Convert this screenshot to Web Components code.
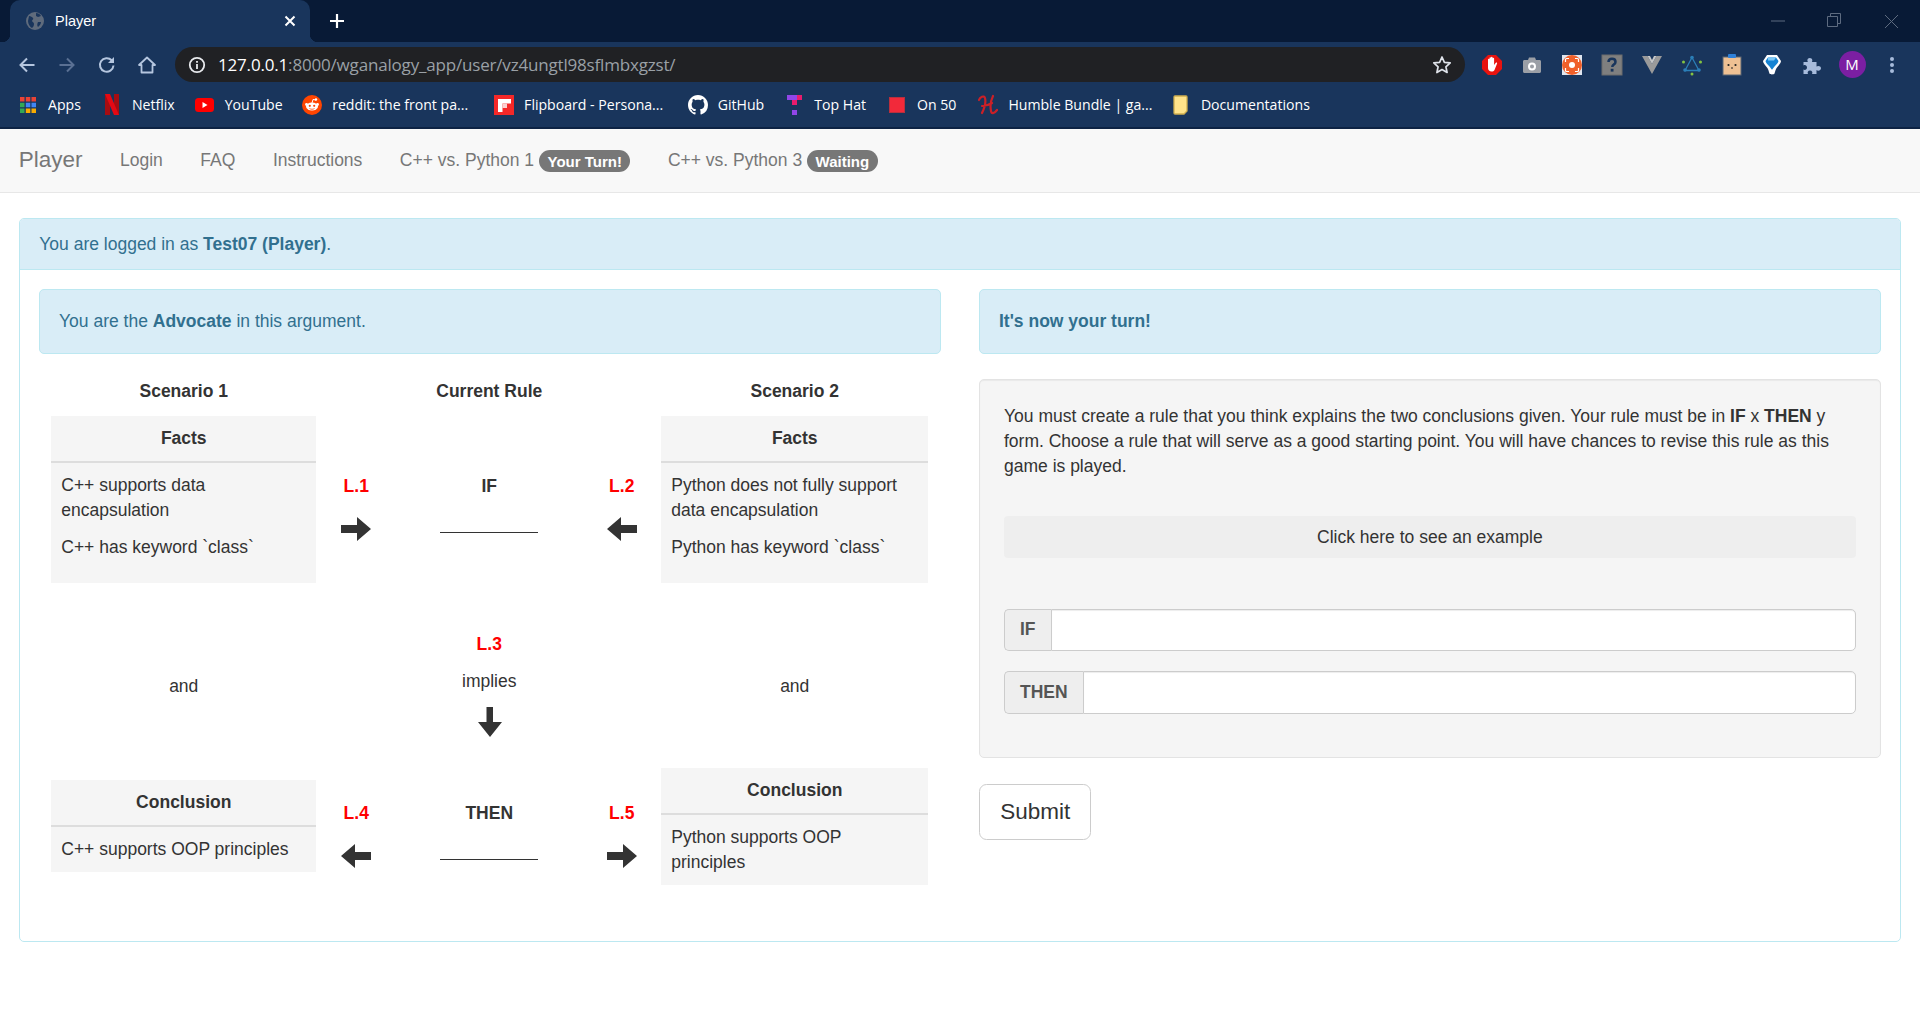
<!DOCTYPE html>
<html>
<head>
<meta charset="utf-8">
<title>Player</title>
<style>
  html, body { margin: 0; padding: 0; background: #fff; }
  body { font: 17.5px/25px "Liberation Sans", Arial, sans-serif; color: #333; }
  fact-box p { margin: 0 0 12.5px; }
  fact-box p:last-child { margin-bottom: 0; }
</style>
</head>
<body>
<browser-chrome></browser-chrome>
<player-nav>
  <nav-link>Login</nav-link>
  <nav-link>FAQ</nav-link>
  <nav-link>Instructions</nav-link>
  <nav-link badge="Your Turn!">C++ vs. Python 1</nav-link>
  <nav-link badge="Waiting">C++ vs. Python 3</nav-link>
</player-nav>
<info-panel>
  <span slot="heading">You are logged in as <b>Test07 (Player)</b>.</span>
  <div slot="left">
    <info-alert>You are the <b>Advocate</b> in this argument.</info-alert>
    <scenario-board>
      <board-title style="grid-column:1">Scenario 1</board-title>
      <board-title style="grid-column:3">Current Rule</board-title>
      <board-title style="grid-column:5">Scenario 2</board-title>

      <fact-box heading="Facts" style="grid-column:1;align-self:stretch">
        <p>C++ supports data encapsulation</p>
        <p>C++ has keyword `class`</p>
      </fact-box>
      <link-label dir="right" style="grid-column:2">L.1</link-label>
      <rule-blank style="grid-column:3">IF</rule-blank>
      <link-label dir="left" style="grid-column:4">L.2</link-label>
      <fact-box heading="Facts" style="grid-column:5;align-self:stretch">
        <p>Python does not fully support data encapsulation</p>
        <p>Python has keyword `class`</p>
      </fact-box>

      <board-and style="grid-column:1">and</board-and>
      <board-implies style="grid-column:3"></board-implies>
      <board-and style="grid-column:5">and</board-and>

      <fact-box heading="Conclusion" style="grid-column:1">
        <p>C++ supports OOP principles</p>
      </fact-box>
      <link-label dir="left" style="grid-column:2">L.4</link-label>
      <rule-blank style="grid-column:3">THEN</rule-blank>
      <link-label dir="right" style="grid-column:4">L.5</link-label>
      <fact-box heading="Conclusion" style="grid-column:5">
        <p>Python supports OOP principles</p>
      </fact-box>
    </scenario-board>
  </div>
  <div slot="right">
    <info-alert><b>It's now your turn!</b></info-alert>
    <rule-form>
      You must create a rule that you think explains the two conclusions given. Your rule must be in <b>IF</b> x <b>THEN</b> <span>y</span> <span>form. Choose a rule that will serve as a good starting point. You will have chances to revise this rule as this game is played.</span>
    </rule-form>
    <submit-button>Submit</submit-button>
  </div>
</info-panel>

<script>
function define(name, html) {
  customElements.define(name, class extends HTMLElement {
    constructor() {
      super();
      this.attachShadow({ mode: 'open' });
      this.shadowRoot.innerHTML = html;
    }
  });
}

const ARROWS = {
  right: '<svg width="30" height="24" viewBox="0 0 30 24"><path d="M0 8H16V0L30 12 16 24V16H0z" fill="#333"/></svg>',
  left: '<svg width="30" height="24" viewBox="0 0 30 24"><path d="M30 8H14V0L0 12 14 24V16H30z" fill="#333"/></svg>',
  down: '<svg width="24" height="30" viewBox="0 0 24 30"><path d="M8.5 0H15V15H24L12 30 0 15H8.5z" fill="#333"/></svg>'
};

define('tab-strip', `
  <style>
    :host { display: flex; align-items: flex-end; height: 42px; background: #081a36; padding-left: 10px; color: #fff; }
    .tab { position: relative; width: 300px; height: 42px; box-sizing: border-box; background: #19355c; border-radius: 10px 10px 0 0; display: flex; align-items: center; padding: 0 13px 0 15px; gap: 10px; font-size: 14.5px; }
    .tab::after { content: ''; position: absolute; right: -8px; bottom: 0; width: 8px; height: 8px; background: radial-gradient(circle at 100% 0, transparent 8px, #19355c 8.5px); }
    .tab::before { content: ''; position: absolute; left: -8px; bottom: 0; width: 8px; height: 8px; background: radial-gradient(circle at 0 0, transparent 8px, #19355c 8.5px); }
    .title { flex: 1; }
    .plus { margin-left: 18px; align-self: center; display: flex; }
    .win { margin-left: auto; display: flex; align-self: center; }
    .win svg { width: 56px; height: 22px; }
  </style>
  <div class="tab">
    <svg width="20" height="20" viewBox="0 0 20 20"><circle cx="10" cy="10" r="9" fill="#5f6b7c"/><path d="M4 5c2 0 3 1 4 2s-1 2-1 3 2 1 2 3-1 3-2 4c-2-1-4-4-4-7zM11 2c2 0 4 1 5 3l-3 1-2-1zM13 11l3 0c0 2-1 3-3 5-1-1-1-3 0-5z" fill="#19355c"/></svg>
    <span class="title">Player</span>
    <svg width="14" height="14" viewBox="0 0 14 14"><path d="M2.5 2.5l9 9m0-9l-9 9" stroke="#fff" stroke-width="2"/></svg>
  </div>
  <span class="plus"><svg width="18" height="18" viewBox="0 0 18 18"><path d="M9 2v14M2 9h14" stroke="#fff" stroke-width="2.2"/></svg></span>
  <span class="win">
    <svg viewBox="0 0 56 22"><path d="M19 11h14" stroke="#5d6b80" stroke-width="1"/></svg>
    <svg viewBox="0 0 56 22"><path d="M19.500 6.500h10v10h-10zM22.500 6.500v-3h10v10h-3" fill="none" stroke="#5d6b80"/></svg>
    <svg viewBox="0 0 56 22"><path d="M21 5l13 13M34 5L21 18" fill="none" stroke="#5d6b80"/></svg>
  </span>
`);

define('browser-toolbar', `
  <style>
    :host { display: flex; height: 45px; background: #19355c; align-items: flex-start; padding: 5px 8px 0 7px; box-sizing: border-box; }
    .btn { width: 40px; height: 35px; display: flex; align-items: center; justify-content: center; flex: none; }
    .nav { display: flex; margin-right: 8px; }
    .bar { flex: none; width: 1290px; height: 35px; border-radius: 18px; background: #202124; display: flex; align-items: center; padding: 0 13px 0 13px; box-sizing: border-box; color: #9aa0a6; font: 17px "Open Sans", sans-serif; letter-spacing: -.18px; }
    .bar b { color: #fff; font-weight: 400; }
    .url { flex: 1; margin-left: 12px; white-space: nowrap; }
    .ext { display: flex; margin-left: 7px; }
  </style>
  <div class="nav">
    <span class="btn"><svg width="20" height="20" viewBox="0 0 20 20"><path d="M17.500 10H4M10 3.500L3.500 10l6.500 6.500" fill="none" stroke="#b5c6df" stroke-width="2"/></svg></span>
    <span class="btn"><svg width="20" height="20" viewBox="0 0 20 20"><path d="M2.500 10H16M10 3.500l6.500 6.500L10 16.500" fill="none" stroke="#5a7093" stroke-width="2"/></svg></span>
    <span class="btn"><svg width="20" height="20" viewBox="0 0 20 20"><path d="M16.500 10.500a6.800 6.800 0 1 1-1.800-5.200" fill="none" stroke="#b5c6df" stroke-width="2"/><path d="M17 2v6h-6z" fill="#b5c6df"/></svg></span>
    <span class="btn"><svg width="20" height="20" viewBox="0 0 20 20"><path d="M10 2.500L2 10h2.500v7.500h11V10H18zM5 9" fill="none" stroke="#b5c6df" stroke-width="1.800" stroke-linejoin="round"/></svg></span>
  </div>
  <div class="bar">
    <svg width="18" height="18" viewBox="0 0 18 18"><circle cx="9" cy="9" r="7.200" fill="none" stroke="#e8eaed" stroke-width="1.800"/><path d="M9 5v1.800M9 8v5" stroke="#e8eaed" stroke-width="1.800"/></svg>
    <span class="url"><b>127.0.0.1</b>:8000/wganalogy_app/user/vz4ungtl98sflmbxgzst/</span>
    <svg width="20" height="20" viewBox="0 0 20 20"><path d="M10 2l2.400 5.300 5.800.6-4.300 3.900 1.200 5.700L10 14.600l-5.100 2.900 1.200-5.700L1.800 7.900l5.800-.6z" fill="none" stroke="#dfe3ea" stroke-width="1.700" stroke-linejoin="round"/></svg>
  </div>
  <div class="ext">
    <span class="btn"><svg width="22" height="22" viewBox="0 0 22 22"><path d="M7 1h8l6 6v8l-6 6H7l-6-6V7z" fill="#e8130f"/><path d="M7 9.500V5.500c0-1 1.500-1 1.500 0V9V4c0-1 1.500-1 1.500 0v5V3.500c0-1 1.600-1 1.600 0V9V4.500c0-1 1.500-1 1.500 0V11l1.500-2c1-1 2 0 1.300 1L13.500 16c-.7 1-1.500 1.500-3 1.500-2 0-3.500-1.500-3.500-3.500z" fill="#fff"/></svg></span>
    <span class="btn"><svg width="22" height="22" viewBox="0 0 22 22"><path d="M2 7.500c0-1 .7-1.500 1.500-1.500H7l1-2.500h6L15 6h3.500c.8 0 1.500.5 1.500 1.500v10c0 .8-.7 1.500-1.500 1.500h-15C2.700 19 2 18.300 2 17.500z" fill="#9b9fa6"/><circle cx="11" cy="12.500" r="3" fill="none" stroke="#fff" stroke-width="2"/></svg></span>
    <span class="btn"><svg width="22" height="22" viewBox="0 0 22 22"><rect x="1" y="1" width="20" height="20" fill="#dfe5ee"/><circle cx="11" cy="11" r="10" fill="#f0602a"/><circle cx="11" cy="11" r="3" fill="#fff"/><path d="M4.500 8V5.500a1 1 0 0 1 1-1H8M14 4.500h2.500a1 1 0 0 1 1 1V8M17.500 14v2.500a1 1 0 0 1-1 1H14M8 17.500H5.500a1 1 0 0 1-1-1V14" fill="none" stroke="#fff" stroke-width="1.200"/></svg></span>
    <span class="btn"><svg width="22" height="22" viewBox="0 0 22 22"><rect x="1" y="1" width="20" height="20" fill="#7f7f7f" stroke="#6d6d6d"/><path d="M7.500 8c0-2 1.500-3.300 3.500-3.300s3.500 1.300 3.500 3.200c0 2.600-3.200 2.700-3.200 5" fill="none" stroke="#19355c" stroke-width="2.500"/><rect x="9.700" y="14.800" width="2.800" height="2.800" fill="#19355c"/></svg></span>
    <span class="btn"><svg width="22" height="20" viewBox="0 0 22 20"><path d="M1 1h5.500L11 9l4.500-8H21L11 19z" fill="#9a9a9a"/><path d="M6.500 1H9l2 4 2-4h2.500L11 9z" fill="#c7c7c7"/></svg></span>
    <span class="btn"><svg width="22" height="22" viewBox="0 0 22 22"><path d="M11 3.500L4 16.500h14z" fill="none" stroke="#2b7fb8" stroke-width="1.300"/><circle cx="11" cy="3.500" r="1.800" fill="#2b7fb8"/><circle cx="4" cy="16" r="1.800" fill="#2b7fb8"/><circle cx="18" cy="16" r="1.800" fill="#2b7fb8"/><circle cx="2.500" cy="8" r="1.500" fill="#84c341"/><circle cx="19.500" cy="8" r="1.500" fill="#84c341"/><circle cx="11" cy="20" r="1.500" fill="#84c341"/></svg></span>
    <span class="btn"><svg width="22" height="24" viewBox="0 0 22 24"><rect x="2" y="4" width="18" height="18" fill="#eec093" stroke="#5b6674"/><rect x="7" y="1" width="8" height="4" rx="1" fill="#2f80d8"/><circle cx="7.500" cy="12" r="1.100" fill="#222"/><circle cx="14.500" cy="12" r="1.100" fill="#222"/><path d="M10 15h2" stroke="#222" stroke-width="1.200"/></svg></span>
    <span class="btn"><svg width="20" height="24" viewBox="0 0 20 24"><path d="M5 2h10l4 6c0 2-2 4-4 6.500-1.300 1.600-1.800 4-2.500 6-.5 1.200-4.500 1.200-5 0-.7-2-1.200-4.400-2.500-6C3 12 1 10 1 8z" fill="#fff"/><path d="M6 4.500h8l2.500 3.500c-.5 2-2 3.500-4 5.500-1.200 1.200-1.500 2.300-2.500 3.300-1-1-1.300-2.100-2.500-3.300-2-2-3.500-3.500-4-5.500z" fill="#1583d3"/><path d="M6 4.500h8l-2 3H6z" fill="#7cc8f5"/></svg></span>
    <span class="btn"><svg width="22" height="22" viewBox="0 0 22 22"><path d="M2.500 8H7c-1-1-1-4 1.800-4S11.800 7 10.800 8h4.700v4.500c1-1 4.500-1 4.500 1.800s-3.500 2.800-4.500 1.800V20H11c1-1.500 0-3.500-2-3.500S6 18.500 7 20H2.500v-4.500c1.500 1 3.500 0 3.500-2S4 10.500 2.500 11.500z" fill="#a7bbdb"/></svg></span>
    <span class="btn"><span style="width:27px;height:27px;border-radius:50%;background:#7b1fa2;color:#fff;font:15px/27px 'Open Sans',sans-serif;text-align:center">M</span></span>
    <span class="btn"><svg width="6" height="20" viewBox="0 0 6 20"><circle cx="3" cy="4" r="2" fill="#a7bbdb"/><circle cx="3" cy="10" r="2" fill="#a7bbdb"/><circle cx="3" cy="16" r="2" fill="#a7bbdb"/></svg></span>
  </div>
`);

define('bookmark-item', `
  <style>
    :host { display: flex; align-items: center; gap: 10px; white-space: nowrap; }
    .icon { width: 20px; height: 22px; display: flex; align-items: center; justify-content: center; }
  </style>
  <span class="icon"><slot name="icon"></slot></span><slot></slot>
`);

define('bookmark-bar', `
  <style>
    :host { display: flex; height: 42px; box-sizing: border-box; background: #19355c; border-bottom: 2px solid #0d2344; align-items: center; padding: 0 0 5px 18px; gap: 21px; color: #fff; font: 14.1px "Open Sans", sans-serif; }
  </style>
  <bookmark-item><svg slot="icon" width="18" height="18" viewBox="0 0 18 18"><path d="M1 1h4.500v4.500H1zM6.800 1h4.500v4.500H6.800zM12.500 1H17v4.500h-4.500z" fill="#ea4335"/><path d="M1 6.800h4.500v4.500H1zM1 12.500h4.500V17H1z" fill="#34a853"/><path d="M6.800 6.800h4.500v4.500H6.800zM12.500 6.800H17v4.500h-4.500z" fill="#4285f4"/><path d="M6.800 12.500h4.500V17H6.800zM12.500 12.500H17V17h-4.500z" fill="#f9ab00"/></svg>Apps</bookmark-item>
  <bookmark-item><svg slot="icon" width="14" height="21" viewBox="0 0 14 21"><path d="M0 0h5v21l-5 .5zM9 0h5v21l-5-.5z" fill="#a60d12"/><path d="M0 0h5l9 21H9z" fill="#e50914"/></svg>Netflix</bookmark-item>
  <bookmark-item style="margin-left:-1px"><svg slot="icon" width="19" height="14" viewBox="0 0 19 14"><rect width="19" height="14" rx="3.500" fill="#f00"/><path d="M7.500 4l5 3-5 3z" fill="#fff"/></svg>YouTube</bookmark-item>
  <bookmark-item style="margin-left:-1.500px"><svg slot="icon" width="20" height="20" viewBox="0 0 20 20"><circle cx="10" cy="10" r="10" fill="#ff4500"/><ellipse cx="10" cy="11.500" rx="6" ry="4" fill="#fff"/><circle cx="4.500" cy="9.500" r="1.400" fill="#fff"/><circle cx="15.500" cy="9.500" r="1.400" fill="#fff"/><circle cx="14" cy="4.500" r="1.200" fill="#fff"/><path d="M10 8l1-3.500 3 .5" fill="none" stroke="#fff"/><circle cx="7.800" cy="10.800" r="1.100" fill="#ff4500"/><circle cx="12.200" cy="10.800" r="1.100" fill="#ff4500"/><path d="M7.500 13.500c1.500 1 3.500 1 5 0" fill="none" stroke="#ff4500" stroke-width=".8"/></svg>reddit: the front pa...</bookmark-item>
  <bookmark-item style="margin-left:5px"><svg slot="icon" width="20" height="20" viewBox="0 0 20 20"><rect width="20" height="20" fill="#f52828"/><path d="M4 4h13v4.500H8.500V13H4z" fill="#fff"/><path d="M4 13h4.500v4H4z" fill="#fff"/><path d="M8.500 8.500h4.500V13H8.500z" fill="#fbd0d0"/></svg>Flipboard - Persona...</bookmark-item>
  <bookmark-item style="margin-left:3.500px"><svg slot="icon" width="20" height="20" viewBox="0 0 16 16"><path fill="#fff" d="M8 0C3.580 0 0 3.580 0 8c0 3.540 2.290 6.530 5.470 7.590.4.070.55-.17.55-.38 0-.19-.01-.82-.01-1.490-2.010.37-2.530-.49-2.690-.94-.09-.23-.48-.94-.82-1.130-.28-.15-.68-.52-.01-.53.63-.01 1.080.58 1.230.82.72 1.210 1.870.87 2.330.66.07-.52.28-.87.51-1.070-1.780-.2-3.640-.89-3.640-3.950 0-.87.31-1.590.82-2.150-.08-.2-.36-1.020.08-2.120 0 0 .67-.21 2.200.82.64-.18 1.320-.27 2-.27.68 0 1.360.09 2 .27 1.530-1.040 2.200-.82 2.200-.82.44 1.100.16 1.920.08 2.120.51.56.82 1.270.82 2.150 0 3.070-1.870 3.750-3.650 3.950.29.25.54.73.54 1.480 0 1.070-.01 1.930-.01 2.200 0 .21.15.46.55.38A8.013 8.013 0 0016 8c0-4.420-3.580-8-8-8z"/></svg>GitHub</bookmark-item>
  <bookmark-item style="margin-left:-1px"><svg slot="icon" width="15" height="20" viewBox="0 0 15 20"><rect width="10" height="5" fill="#9146e8"/><rect x="10" width="5" height="5" fill="#e81c6d"/><rect x="5" y="5" width="5" height="5" fill="#e81c6d"/><rect x="5" y="15" width="5" height="5" fill="#9146e8"/></svg>Top Hat</bookmark-item>
  <bookmark-item><svg slot="icon" width="16" height="16" viewBox="0 0 16 16"><rect x=".5" y=".5" width="15" height="15" fill="#f2293a" stroke="#b8303d"/></svg>On 50</bookmark-item>
  <bookmark-item style="margin-left:1px"><svg slot="icon" width="20" height="22" viewBox="0 0 20 22"><path d="M1 6c1-3 5-5 6-2 1 4-1 11-3 15M15 2c-2 4-3 10-2 15 .5 3 3 3 6-1M4 12c3 0 7-1 10-3" fill="none" stroke="#cb2027" stroke-width="2.200" stroke-linecap="round"/></svg>Humble Bundle | ga...</bookmark-item>
  <bookmark-item style="margin-left:-2.500px"><svg slot="icon" width="16" height="20" viewBox="0 0 16 20"><path d="M1 2a1 1 0 0 1 1-1h11a1 1 0 0 1 1 1v14l-3 3H2a1 1 0 0 1-1-1z" fill="#ffe38a" stroke="#cfae4f" stroke-width="1.300"/></svg>Documentations</bookmark-item>
`);

define('browser-chrome', `
  <style>:host { display: block; }</style>
  <tab-strip></tab-strip>
  <browser-toolbar></browser-toolbar>
  <bookmark-bar></bookmark-bar>
`);

define('nav-link', `
  <style>
    :host { display: block; padding: 19px 18.75px; color: #777; white-space: nowrap; }
    .badge { display: inline-block; padding: 3.75px 8.5px; background: #777; color: #fff; font-size: 15px; font-weight: 700; line-height: 15px; border-radius: 12.5px; vertical-align: -.5px; }
    .badge:empty { display: none; }
  </style>
  <slot></slot> <span class="badge"></span>
`);
customElements.whenDefined('nav-link').then(() => {
  document.querySelectorAll('nav-link').forEach(link => {
    link.shadowRoot.querySelector('.badge').textContent = link.getAttribute('badge') || '';
  });
});

define('player-nav', `
  <style>
    :host { display: flex; height: 64px; box-sizing: border-box; background: #f8f8f8; border-bottom: 1px solid #e7e7e7; margin-bottom: 25px; }
    .brand { padding: 18px 18.75px; color: #777; font-size: 22.5px; }
  </style>
  <div class="brand">Player</div><slot></slot>
`);

define('info-panel', `
  <style>
    :host { display: block; margin: 0 18.75px; border: 1px solid #bce8f1; border-radius: 5px; box-sizing: border-box; }
    .head { padding: 12.5px 15px 12.5px 19.5px; background: #d9edf7; color: #31708f; border-bottom: 1px solid #bce8f1; border-radius: 4px 4px 0 0; }
    .body { display: grid; grid-template-columns: 1fr 1fr; gap: 38px; padding: 18.75px 19px 18.75px 19.5px; }
  </style>
  <div class="head"><slot name="heading"></slot></div>
  <div class="body"><slot name="left"></slot><slot name="right"></slot></div>
`);

define('info-alert', `
  <style>
    :host { display: block; padding: 18.75px; min-height: 65px; box-sizing: border-box; background: #d9edf7; border: 1px solid #bce8f1; border-radius: 5px; color: #31708f; }
  </style>
  <slot></slot>
`);

define('scenario-board', `
  <style>
    :host { display: block; margin: 23.5px 12px 37px; }
    .grid { display: grid; grid-template-columns: 265px 80px 186px 79px 267px; grid-template-rows: 38.5px 167px 185px 117px; }
  </style>
  <div class="grid"><slot></slot></div>
`);

define('board-title', `
  <style>:host { display: block; padding-top: 2px; text-align: center; font-weight: 700; }</style>
  <slot></slot>
`);

define('board-and', `
  <style>:host { display: block; text-align: center; padding-top: 91.5px; }</style>
  <slot></slot>
`);

define('board-implies', `
  <style>
    :host { display: flex; flex-direction: column; align-items: center; padding-top: 49px; }
    b { color: #f00; margin-bottom: 12.5px; }
    svg { display: block; margin: 13px 0 0 2px; }
  </style>
  <b>L.3</b><span>implies</span>${ARROWS.down}
`);

define('fact-box', `
  <style>
    :host { display: block; align-self: center; background: #f5f5f5; }
    .head { padding: 10px; text-align: center; font-weight: 700; border-bottom: 2px solid #ddd; }
    .body { padding: 10px; }
  </style>
  <div class="head"></div>
  <div class="body"><slot></slot></div>
`);
customElements.whenDefined('fact-box').then(() => {
  document.querySelectorAll('fact-box').forEach(box => {
    box.shadowRoot.querySelector('.head').textContent = box.getAttribute('heading');
  });
});

define('link-label', `
  <style>
    :host { display: flex; flex-direction: column; align-items: center; align-self: center; height: 52px; margin-top: 2px; font-weight: 700; color: #f00; }
    .arrow { margin-top: 17.5px; line-height: 0; }
  </style>
  <slot></slot><span class="arrow"></span>
`);
customElements.whenDefined('link-label').then(() => {
  document.querySelectorAll('link-label').forEach(label => {
    label.shadowRoot.querySelector('.arrow').innerHTML = ARROWS[label.getAttribute('dir')];
  });
});

define('rule-blank', `
  <style>
    :host { display: flex; flex-direction: column; align-items: center; align-self: center; height: 52px; margin-top: 2px; font-weight: 700; }
    .line { width: 98px; margin-top: 33px; border-top: 1.25px solid #333; }
  </style>
  <slot></slot><span class="line"></span>
`);

define('input-row', `
  <style>
    :host { display: flex; height: 42.5px; margin-bottom: 20px; }
    .addon { padding: 7.5px 15px; background: #eee; border: 1px solid #ccc; border-right: 0; border-radius: 5px 0 0 5px; color: #555; font-weight: 700; }
    input { flex: 1; min-width: 0; box-sizing: border-box; border: 1px solid #ccc; border-radius: 0 5px 5px 0; background: #fff; box-shadow: inset 0 1px 1px rgba(0,0,0,.075); margin: 0; padding: 0 15px; }
  </style>
  <span class="addon"><slot></slot></span><input type="text">
`);

define('rule-form', `
  <style>
    :host { display: block; margin-top: 25px; padding: 23.75px 24.5px 23px 23.75px; background: #f5f5f5; border: 1px solid #e3e3e3; border-radius: 5px; box-shadow: inset 0 1px 1px rgba(0,0,0,.05); }
    .example { margin: 37.5px 0 50.5px; padding: 8.5px; height: 42px; box-sizing: border-box; text-align: center; background: #eee; border-radius: 4px; }
  </style>
  <div><slot></slot></div>
  <div class="example">Click here to see an example</div>
  <input-row>IF</input-row>
  <input-row>THEN</input-row>
`);

define('submit-button', `
  <style>
    :host { display: inline-block; margin-top: 26px; padding: 12px 20px; background: #fff; border: 1px solid #ccc; border-radius: 7.5px; font-size: 22.5px; line-height: 30px; color: #333; }
  </style>
  <slot></slot>
`);
</script>
</body>
</html>
